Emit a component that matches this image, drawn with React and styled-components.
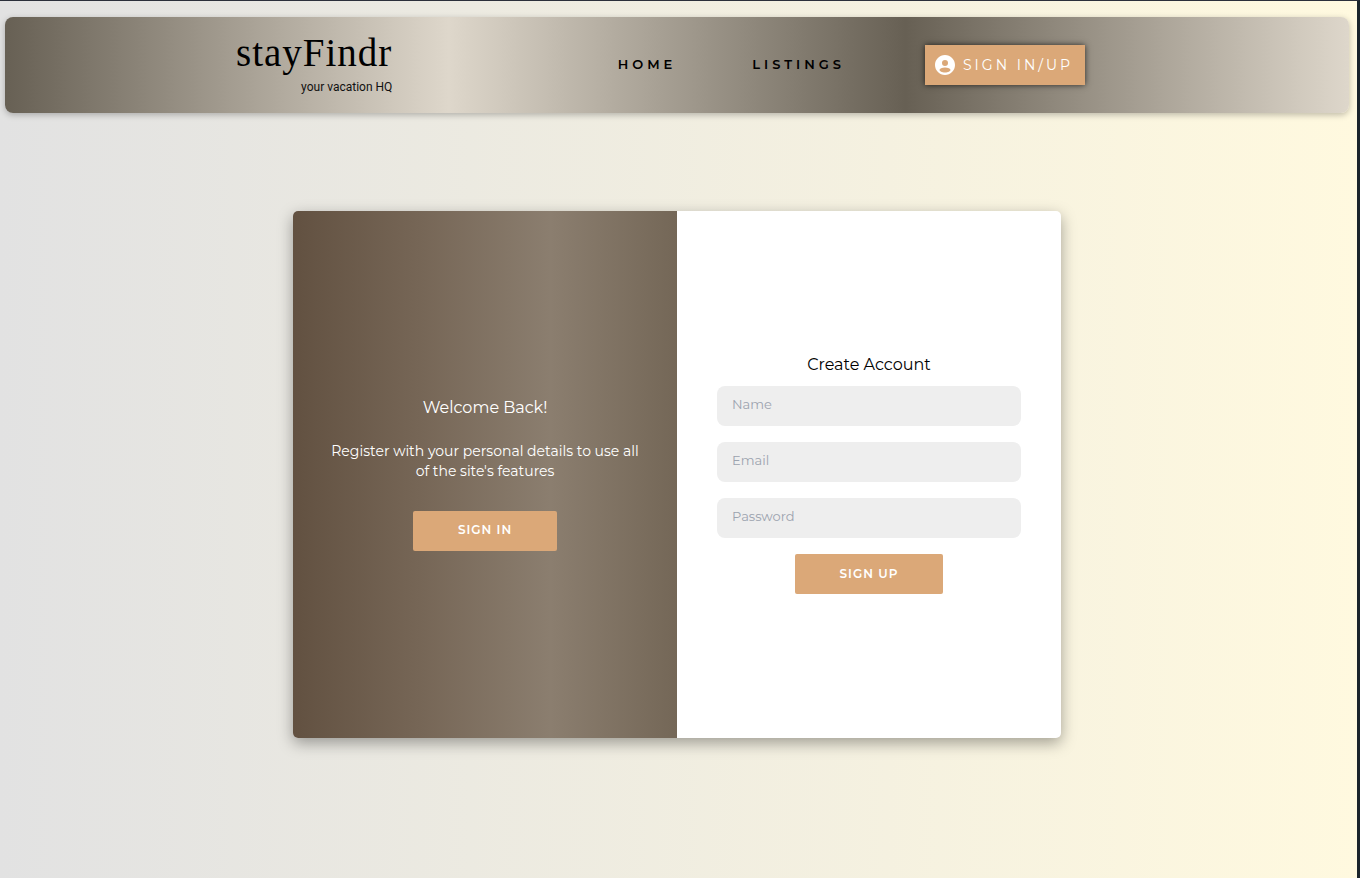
import React from "react";
import styled, { createGlobalStyle } from "styled-components";

const GlobalStyle = createGlobalStyle`
  * { box-sizing: border-box; }
  body { margin: 0; }
  body, button, input {
    font-family: Montserrat, Inter, "Liberation Sans", sans-serif;
  }
`;

const Page = styled.div`
  min-height: 100vh;
  padding: 16px 8px 48px 5px;
  border-top: 1px solid #2b2f3a;
  border-right: 3px solid #1a242b;
  background: linear-gradient(to right, #e2e2e2, #fff9df);
`;

const Header = styled.header`
  display: flex;
  flex-wrap: wrap;
  align-items: center;
  justify-content: space-between;
  gap: 16px;
  min-height: 96px;
  padding: 0 264px 0 231px;
  border-radius: 8px;
  background: linear-gradient(to right, #676054, #ded7cb 33%, #676054 67%, #ded7cb);
  box-shadow: 0 2px 6px rgba(0, 0, 0, 0.25);

  @media (max-width: 1200px) {
    padding: 8px 32px;
  }
`;

const Logo = styled.a`
  display: flex;
  flex-direction: column;
  align-items: flex-end;
  padding-bottom: 5px;
  color: #000;
  text-decoration: none;
`;

const LogoName = styled.span`
  font: 400 39px/48px "Liberation Serif", serif;
  letter-spacing: 1px;
`;

const LogoTagline = styled.span`
  font: 400 12px/20px Roboto, sans-serif;
  color: #111;
`;

const Nav = styled.nav`
  display: flex;
  align-items: center;
  gap: 80px;
`;

const Links = styled.div`
  display: flex;
  gap: 76px;
  padding-bottom: 2px;
`;

const NavLink = styled.a`
  color: #000;
  font-size: 13px;
  font-weight: 600;
  letter-spacing: 4px;
  text-decoration: none;
`;

const AccountButton = styled.button`
  display: flex;
  align-items: center;
  gap: 6px;
  width: 160px;
  height: 40px;
  padding: 0 8px;
  border: 0;
  background: #dba878;
  box-shadow: 0 0 6px rgba(0, 0, 0, 0.7);
  color: #fff;
  font-size: 14px;
  font-weight: 400;
  letter-spacing: 3px;
  white-space: nowrap;

  svg { flex: none; }
`;

const Card = styled.main`
  display: grid;
  grid-template-columns: 1fr 1fr;
  max-width: 768px;
  min-height: 527px;
  margin: 98px auto 0;
  border-radius: 5px;
  overflow: hidden;
  background: #fff;
  box-shadow: 0 5px 15px rgba(0, 0, 0, 0.35);
`;

const Panel = styled.section`
  display: flex;
  flex-direction: column;
  align-items: center;
  justify-content: center;
  padding: 0 30px 3px;
  text-align: center;
  color: #fff;
  background: linear-gradient(to right, #625141, #766656 33%, #8b7e6f 67%, #746757);
`;

const Form = styled.form`
  display: flex;
  flex-direction: column;
  align-items: center;
  justify-content: center;
  gap: 16px;
  padding: 0 40px 2px;
`;

const Title = styled.h1`
  margin: 0;
  font-size: 16px;
  line-height: 24px;
  font-weight: 400;
`;

const FormTitle = styled(Title)`
  margin-bottom: -7px;
`;

const Text = styled.p`
  margin: 21px 0 30px;
  font-size: 14px;
  line-height: 20px;
`;

const Input = styled.input`
  width: 100%;
  height: 40px;
  padding: 0 15px 4px;
  border: 0;
  border-radius: 8px;
  background: #eee;
  font-size: 13px;

  &::placeholder { color: #9ca3af; opacity: 1; }
`;

const Action = styled.button`
  height: 40px;
  padding: 0 45px 2px;
  border: 0;
  border-radius: 2px;
  background: #dba878;
  color: #fff;
  font-size: 12px;
  font-weight: 600;
  letter-spacing: 1px;
`;

const AccountIcon = () => (
  <svg width="24" height="24" viewBox="0 0 24 24" fill="currentColor" aria-hidden="true">
    <path d="M12 2C6.48 2 2 6.48 2 12s4.48 10 10 10 10-4.48 10-10S17.52 2 12 2zm0 5a3 3 0 1 1 0 6 3 3 0 0 1 0-6zm0 12.500c-3 0-5.500-1.500-5.500-2.500 0-1.500 2.500-2.500 5.500-2.500s5.500 1 5.500 2.500c0 1-2.500 2.500-5.500 2.500z" />
  </svg>
);

export default function App() {
  return (
    <>
      <GlobalStyle />
      <Page>
        <Header>
          <Logo href="#">
            <LogoName>stayFindr</LogoName>
            <LogoTagline>your vacation HQ</LogoTagline>
          </Logo>
          <Nav>
            <Links>
              <NavLink href="#">HOME</NavLink>
              <NavLink href="#listings">LISTINGS</NavLink>
            </Links>
            <AccountButton type="button">
              <AccountIcon />
              SIGN IN/UP
            </AccountButton>
          </Nav>
        </Header>
        <Card>
          <Panel>
            <Title>Welcome Back!</Title>
            <Text>Register with your personal details to use all of the site's features</Text>
            <Action type="button">SIGN IN</Action>
          </Panel>
          <Form>
            <FormTitle>Create Account</FormTitle>
            <Input type="text" placeholder="Name" aria-label="Name" />
            <Input type="email" placeholder="Email" aria-label="Email" />
            <Input type="password" placeholder="Password" aria-label="Password" />
            <Action type="submit">SIGN UP</Action>
          </Form>
        </Card>
      </Page>
    </>
  );
}
